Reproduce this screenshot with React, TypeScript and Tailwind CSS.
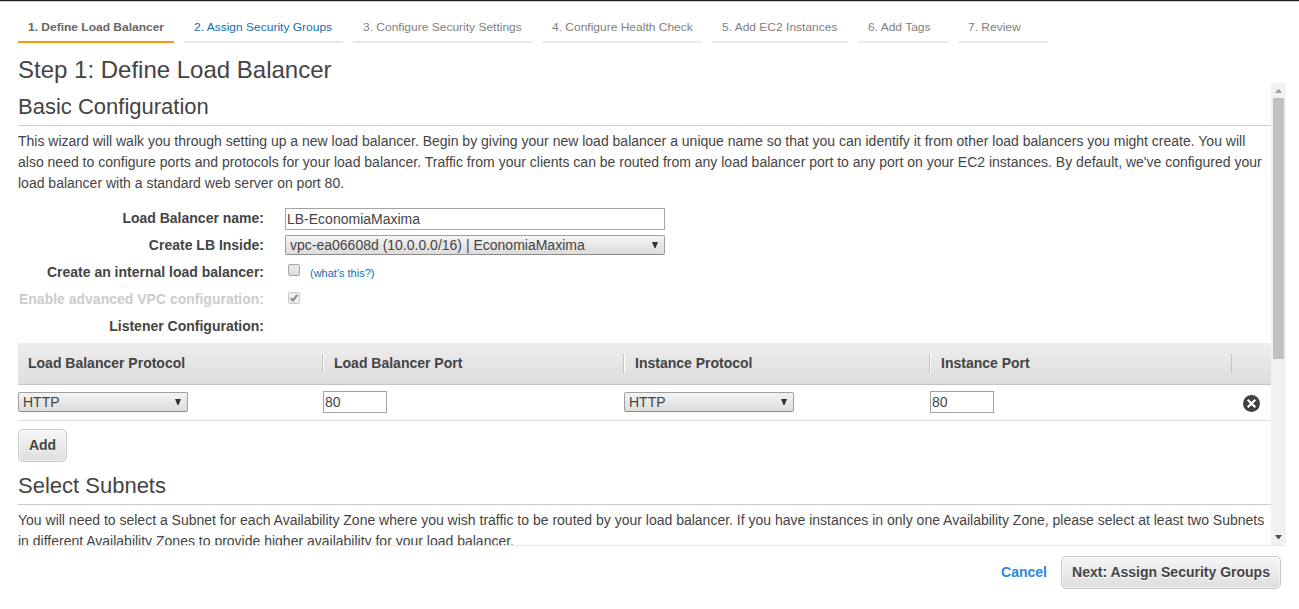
import type { ReactNode } from "react";

const steps = [
  { label: "1. Define Load Balancer", width: "w-[156px]", tone: "border-[#ff9900] font-bold text-[#666]" },
  { label: "2. Assign Security Groups", width: "w-[159px]", tone: "border-[#eaeaea] text-[#146eb4]" },
  { label: "3. Configure Security Settings", width: "w-[179px]", tone: "border-[#eaeaea] text-[#808080]" },
  { label: "4. Configure Health Check", width: "w-[160px]", tone: "border-[#eaeaea] text-[#808080]" },
  { label: "5. Add EC2 Instances", width: "w-[136px]", tone: "border-[#eaeaea] text-[#808080]" },
  { label: "6. Add Tags", width: "w-[90px]", tone: "border-[#eaeaea] text-[#808080]" },
  { label: "7. Review", width: "w-[90px]", tone: "border-[#eaeaea] text-[#808080]" },
];

function SelectBox({ value, width }: { value: string; width: string }) {
  return (
    <div
      className={`${width} flex h-5 items-center justify-between rounded-[2px] border border-[#a0a0a0] border-b-[#8c8c8c] bg-linear-to-b from-[#f4f4f4] to-[#dcdcdc] pr-[6px] pl-1 leading-[18px]`}
    >
      <span>{value}</span>
      <svg width="6" height="6" viewBox="0 0 6 6" className="mb-px">
        <path d="M0 0h6L3.5 6h-1z" fill="#333" />
      </svg>
    </div>
  );
}

function TextBox({ value, width }: { value: string; width: string }) {
  return (
    <input
      readOnly
      value={value}
      className={`${width} block h-[22px] border border-[#a3a3a3] bg-white px-px text-[#444] outline-none`}
    />
  );
}

function FormRow({ label, muted, children }: { label: string; muted?: boolean; children?: ReactNode }) {
  return (
    <div className="flex h-[27px]">
      <div className={`w-[246px] text-right leading-[27px] font-bold ${muted ? "text-[#ccc]" : ""}`}>{label}</div>
      <div className="ml-[21px] flex">{children}</div>
    </div>
  );
}

function Heading({ children }: { children: ReactNode }) {
  return <h2 className="h-[43px] border-b border-[#ccc] pt-[11px] text-[22px] leading-[26px]">{children}</h2>;
}

function Column({ label, width, first }: { label: string; width: string; first?: boolean }) {
  return (
    <div
      className={`${width} h-[19px] font-bold leading-[19px] ${first ? "pl-[10px]" : "border-l border-[#c4c4c4] pl-[11px] shadow-[inset_1px_0_0_#fff]"}`}
    >
      {label}
    </div>
  );
}

const buttonClass =
  "h-[33px] rounded-[5px] border border-[#c8c8c8] bg-linear-to-b from-[#f6f6f6] to-[#dedede] px-[9px] leading-[31px] font-bold whitespace-nowrap shadow-[inset_0_0_0_1px_rgba(255,255,255,0.5)] [text-shadow:0_1px_0_#fff]";

export default function App() {
  return (
    <div className="flex h-[609px] w-[1299px] flex-col overflow-hidden bg-white font-['Liberation_Sans',Arial,sans-serif] text-[14px] text-[#444]">
      <div className="h-[2px] shrink-0 border-t border-b border-t-[#231f20] border-b-[#ccc]" />
      <nav className="flex h-[41px] shrink-0 gap-[10px] pl-[18px]">
        {steps.map((s) => (
          <div
            key={s.label}
            className={`${s.width} ${s.tone} border-b-2 pt-[17px] pl-[10px] text-[12px] leading-4 whitespace-nowrap`}
          >
            <span className="inline-block origin-[0_12px] scale-y-[0.93]">{s.label}</span>
          </div>
        ))}
      </nav>
      <h1 className="h-10 shrink-0 pt-[13px] pl-[18px] text-[24px] leading-7 whitespace-nowrap">
        Step 1: Define Load Balancer
      </h1>

      <div className="ml-[18px] flex h-[463px] w-[1268px] shrink-0 border-b border-[#e8e8e8]">
        <main className="h-[462px] w-[1253px] overflow-hidden">
          <Heading>Basic Configuration</Heading>
          <p className="pt-[5px] leading-[21px] whitespace-nowrap">
            This wizard will walk you through setting up a new load balancer. Begin by giving your new load balancer a
            unique name so that you can identify it from other load balancers you might create. You will
            <br />
            also need to configure ports and protocols for your load balancer. Traffic from your clients can be routed
            from any load balancer port to any port on your EC2 instances. By default, we've configured your
            <br />
            load balancer with a standard web server on port 80.
          </p>

          <div className="mt-[11px] h-[138px]">
            <FormRow label="Load Balancer name:">
              <div className="pt-[3px]">
                <TextBox value="LB-EconomiaMaxima" width="w-[380px]" />
              </div>
            </FormRow>
            <FormRow label="Create LB Inside:">
              <div className="pt-[3px]">
                <SelectBox value="vpc-ea06608d (10.0.0.0/16) | EconomiaMaxima" width="w-[380px]" />
              </div>
            </FormRow>
            <FormRow label="Create an internal load balancer:">
              <span className="mt-[5px] ml-[3px] size-3 rounded-[2px] border border-[#a6a6a6] bg-linear-to-b from-[#ededed] to-[#dcdcdc]" />
              <a className="ml-[10px] text-[11px] leading-[28px] text-[#146eb4]">(what's this?)</a>
            </FormRow>
            <FormRow label="Enable advanced VPC configuration:" muted>
              <span className="mt-[6px] ml-[3px] size-3 rounded-[2px] border border-[#c8c8c8] bg-[#f0f0f0]">
                <svg width="10" height="10" viewBox="0 0 10 10">
                  <path d="M1.7 5.2 4 7.5 8.3 1.8" fill="none" stroke="#919191" strokeWidth="2.2" />
                </svg>
              </span>
            </FormRow>
            <FormRow label="Listener Configuration:" />
          </div>

          <div className="flex h-[42px] items-center border-b border-[#c5c5c5] bg-linear-to-b from-[#ededed] to-[#dedede]">
            <Column label="Load Balancer Protocol" width="w-[304px]" first />
            <Column label="Load Balancer Port" width="w-[301px]" />
            <Column label="Instance Protocol" width="w-[306px]" />
            <Column label="Instance Port" width="w-[302px]" />
            <div className="h-[19px] w-10 border-l border-[#c4c4c4]" />
          </div>
          <div className="flex h-9 border-b border-[#ddd]">
            <div className="w-[305px] pt-[7px]">
              <SelectBox value="HTTP" width="w-[170px]" />
            </div>
            <div className="w-[301px] pt-[6px]">
              <TextBox value="80" width="w-16" />
            </div>
            <div className="w-[306px] pt-[7px]">
              <SelectBox value="HTTP" width="w-[170px]" />
            </div>
            <div className="w-[312px] pt-[6px]">
              <TextBox value="80" width="w-16" />
            </div>
            <svg width="18" height="18" viewBox="0 0 18 18" className="mt-[10px]">
              <circle cx="9.5" cy="8.5" r="8.5" fill="#404040" />
              <path d="m5.7 4.7 7.6 7.6m0-7.6-7.6 7.6" stroke="#fff" strokeWidth="2.2" />
            </svg>
          </div>
          <button className={`${buttonClass} mt-2 block w-[49px]`}>Add</button>
          <Heading>Select Subnets</Heading>
          <p className="pt-[5px] leading-[21px] whitespace-nowrap">
            You will need to select a Subnet for each Availability Zone where you wish traffic to be routed by your load
            balancer. If you have instances in only one Availability Zone, please select at least two Subnets
            <br />
            in different Availability Zones to provide higher availability for your load balancer.
          </p>
        </main>
        <div className="flex w-[15px] flex-col items-center bg-[#f1f1f1]">
          <svg width="15" height="15" viewBox="0 0 15 15" className="shrink-0">
            <path d="M4 10h7L8 6H7z" fill="#a3a3a3" />
          </svg>
          <div className="-ml-px h-[261px] w-[11px] bg-[#c1c1c1]" />
          <svg width="15" height="15" viewBox="0 0 15 15" className="mt-auto shrink-0">
            <path d="M4 5h7L8 9H7z" fill="#505050" />
          </svg>
        </div>
      </div>

      <footer className="flex items-center justify-end gap-[14px] pt-[10px] pr-[18px]">
        <a className="font-bold text-[#2e86de]">Cancel</a>
        <button className={`${buttonClass} w-[220px]`}>Next: Assign Security Groups</button>
      </footer>
    </div>
  );
}
